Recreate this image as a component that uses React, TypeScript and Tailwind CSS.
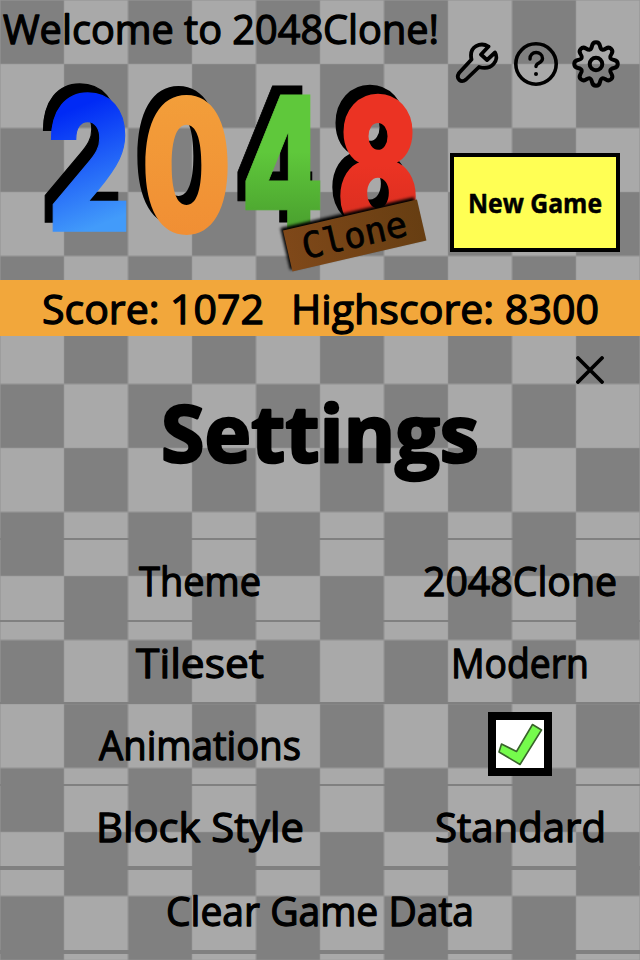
import React from 'react';

const digits = [
  { ch: '2', x: 50, w: 78, y: 231, fill: 'url(#blue)', bold: 1.5 },
  { ch: '0', x: 144, w: 85, y: 233, fill: 'url(#orange)', bold: 0 },
  { ch: '4', x: 244, w: 77, y: 231, fill: 'url(#green)', bold: 1 },
  { ch: '8', x: 340, w: 76, y: 233, fill: 'url(#red)', bold: 2.5 },
];

function Checkerboard({ children }: { children: React.ReactNode }) {
  return (
    <div className="relative h-[960px] w-[640px] overflow-hidden bg-[#808080]">
      <svg className="absolute inset-0" width="640" height="960">
        <defs>
          <pattern id="tiles" width="128" height="128" patternUnits="userSpaceOnUse">
            <rect width="128" height="128" fill="#808080" />
            <rect x="64" width="64" height="64" fill="#a9a9a9" />
            <rect y="64" width="64" height="64" fill="#a9a9a9" />
            <path d="M.5 0V128M64 0V128M127.5 0V128M0 .5H128M0 64H128M0 127.5H128" stroke="#949494" strokeOpacity=".6" />
          </pattern>
        </defs>
        <rect width="640" height="960" fill="url(#tiles)" />
      </svg>
      <div className="relative flex h-full flex-col">{children}</div>
    </div>
  );
}

function Label({ children, w, className = '' }: { children: string; w: number; className?: string }) {
  return (
    <svg className={'block shrink-0 overflow-visible ' + className} width={w} height="48">
      <text x="0" y="36" textLength={w} lengthAdjust="spacingAndGlyphs" fontSize="41" stroke="#000" strokeWidth="1.3" strokeLinejoin="round">{children}</text>
    </svg>
  );
}

function Logo() {
  return (
    <svg className="absolute left-0 top-0" width="450" height="280">
      <defs>
        <linearGradient id="blue" x1="0" y1="0" x2=".15" y2="1"><stop offset=".3" stopColor="#002af5" /><stop offset=".85" stopColor="#429bfa" /></linearGradient>
        <linearGradient id="orange" x1="0" y1="0" x2="0" y2="1"><stop offset="0" stopColor="#f3a33c" /><stop offset="1" stopColor="#f08a32" /></linearGradient>
        <linearGradient id="green" x1="0" y1="0" x2="0" y2="1"><stop offset=".45" stopColor="#5fc83b" /><stop offset=".9" stopColor="#43932a" /></linearGradient>
        <linearGradient id="red" x1="0" y1="0" x2="0" y2="1"><stop offset=".5" stopColor="#eb3323" /><stop offset="1" stopColor="#c92a1d" /></linearGradient>
        <linearGradient id="wood"><stop stopColor="#7f4819" /><stop offset="1" stopColor="#673e12" /></linearGradient>
        <filter id="soft" x="-10%" y="-30%" width="120%" height="160%"><feGaussianBlur stdDeviation="1.8" /></filter>
      </defs>
      <g fontWeight="900" fontSize="187" className="font-['Inter',sans-serif] [filter:drop-shadow(-8px_-9px_0_#000)]">
        {digits.map((d) => (
          <text key={d.ch} x={d.x - 3} y={d.y} textLength={d.w + 6} lengthAdjust="spacingAndGlyphs" fill={d.fill} stroke={d.fill} strokeWidth={d.bold}>{d.ch}</text>
        ))}
      </g>
      <g transform="translate(283 230.5) rotate(-13)">
        <rect x="-2" y="-3" width="137" height="43" filter="url(#soft)" />
        <rect width="137.5" height="42" fill="url(#wood)" />
        <text x="15" y="33" fontSize="35.5" stroke="#000" strokeWidth=".7" className="font-['DejaVu_Sans_Mono',monospace]">Clone</text>
      </g>
    </svg>
  );
}

function Wrench() {
  return (
    <svg width="44" height="44" viewBox="0 0 44 44" fill="none" stroke="#000" strokeWidth="3.8" strokeLinecap="round" strokeLinejoin="round">
      <path d="M33.500 4.500C26-.2 13.5 4 16.5 17.5L4 31C.5 37 6 41.500 11 37.500L24 25C37 29 44.500 18 40 10.500L32 18L26 12.500Z" />
    </svg>
  );
}

function Help() {
  return (
    <svg width="44" height="44" viewBox="0 0 44 44" fill="none" stroke="#000" strokeLinecap="round">
      <circle cx="22" cy="22" r="20.2" strokeWidth="3.6" />
      <path d="M16 17C15.500 8.500 28.500 8.500 28.500 16.500C28.500 21.500 22 20.500 22 24.500" strokeWidth="3.4" />
      <circle cx="22" cy="32" r="2" fill="#000" stroke="none" />
    </svg>
  );
}

function Gear() {
  return (
    <svg width="48" height="48" viewBox="-24 -24 48 48" fill="none" stroke="#000" strokeWidth="4" strokeLinejoin="round">
      <circle r="6.300" />
      <path d="M-4 -18C-3 -23 3 -23 4 -18C5 -13.500 7 -13.500 10 -15.500C14 -18 18 -14 15.500 -10C13.500 -7 13.500 -5 18 -4C23 -3 23 3 18 4C13.500 5 13.500 7 15.500 10C18 14 14 18 10 15.500C7 13.500 5 13.500 4 18C3 23 -3 23 -4 18C-5 13.500 -7 13.500 -10 15.500C-14 18 -18 14 -15.500 10C-13.500 7 -13.500 5 -18 4C-23 3 -23 -3 -18 -4C-13.500 -5 -13.500 -7 -15.500 -10C-18 -14 -14 -18 -10 -15.500C-7 -13.500 -5 -13.500 -4 -18Z" />
    </svg>
  );
}

function Row({ name, w, children }: { name: string; w: number; children: React.ReactNode }) {
  return (
    <div className="flex h-[82px] items-center border-t-2 border-[#808080]">
      <div className="flex w-[400px] justify-center"><Label w={w} className="mt-2">{name}</Label></div>
      <div className="flex w-[240px] justify-center">{children}</div>
    </div>
  );
}

export default function App() {
  return (
    <div className="font-['Comic_Sans_MS','Open_Sans',sans-serif] text-black">
      <Checkerboard>
        <header className="relative flex h-[280px] justify-between">
          <Logo />
          <Label w={436} className="ml-[3px] mt-2">Welcome to 2048Clone!</Label>
          <div className="flex w-[190px] shrink-0 flex-col">
            <div className="mt-10 flex items-center pl-[5px]">
              <Wrench />
              <span className="ml-[15px]"><Help /></span>
              <span className="ml-[14px]"><Gear /></span>
            </div>
            <button className="mt-[65px] flex h-[99px] w-[170px] items-center justify-center border-4 border-black bg-[#ffff54]">
              <svg width="134" height="32" className="overflow-visible">
                <text y="26" fontSize="27" fontWeight="700" textLength="134" lengthAdjust="spacingAndGlyphs" stroke="#000" strokeWidth=".5" strokeLinejoin="round">New Game</text>
              </svg>
            </button>
          </div>
        </header>
        <div className="flex h-14 items-center bg-[#f2a73b]">
          <Label w={222} className="ml-[42px] mt-2">Score: 1072</Label>
          <Label w={308} className="ml-[27px] mt-2">Highscore: 8300</Label>
        </div>
        <section className="flex flex-col">
          <div className="flex h-[50px] justify-end pr-9 pt-5">
            <svg width="28" height="28" stroke="#000" strokeWidth="3.8" strokeLinecap="round"><path d="M2 2L26 26M26 2L2 26" /></svg>
          </div>
          <h1 className="flex h-[152px] justify-center">
            <svg width="318" height="110" className="overflow-visible">
              <text y="76" fontSize="78" fontWeight="700" textLength="318" lengthAdjust="spacingAndGlyphs" stroke="#000" strokeWidth="2.500" strokeLinejoin="round">Settings</text>
            </svg>
          </h1>
          <Row name="Theme" w={122}><Label w={194} className="mt-2">2048Clone</Label></Row>
          <Row name="Tileset" w={128}><Label w={138} className="mt-2">Modern</Label></Row>
          <Row name="Animations" w={202}>
            <div className="flex size-16 shrink-0 border-8 border-black bg-white">
              <svg className="shrink-0" width="48" height="48" viewBox="0 0 48 48"><path d="M5.500 24L20.500 31.500L36.500 4.500L45.500 10L24 44.500L3 32Z" fill="#75fb4c" stroke="#39642b" strokeWidth="1.600" strokeLinejoin="round" /></svg>
            </div>
          </Row>
          <Row name="Block Style" w={208}><Label w={171} className="mt-2">Standard</Label></Row>
          <div className="flex h-[88px] items-center justify-center border-y-4 border-[#808080]"><Label w={308} className="mt-2">Clear Game Data</Label></div>
        </section>
      </Checkerboard>
    </div>
  );
}
